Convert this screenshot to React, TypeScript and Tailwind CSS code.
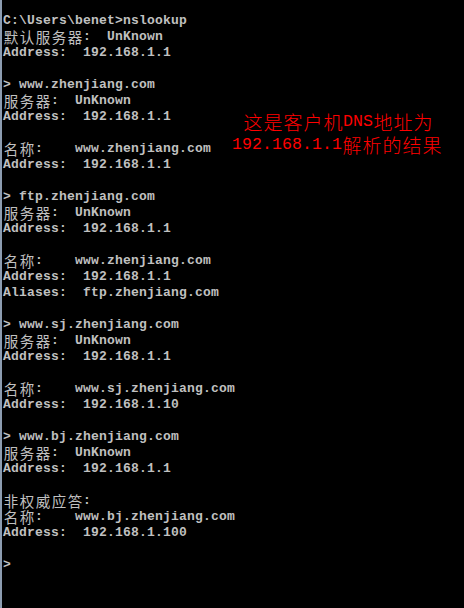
import React from 'react';

const lines: string[] = [
  'C:\\Users\\benet>nslookup',
  '默认服务器:  UnKnown',
  'Address:  192.168.1.1',
  '',
  '> www.zhenjiang.com',
  '服务器:  UnKnown',
  'Address:  192.168.1.1',
  '',
  '名称:    www.zhenjiang.com',
  'Address:  192.168.1.1',
  '',
  '> ftp.zhenjiang.com',
  '服务器:  UnKnown',
  'Address:  192.168.1.1',
  '',
  '名称:    www.zhenjiang.com',
  'Address:  192.168.1.1',
  'Aliases:  ftp.zhenjiang.com',
  '',
  '> www.sj.zhenjiang.com',
  '服务器:  UnKnown',
  'Address:  192.168.1.1',
  '',
  '名称:    www.sj.zhenjiang.com',
  'Address:  192.168.1.10',
  '',
  '> www.bj.zhenjiang.com',
  '服务器:  UnKnown',
  'Address:  192.168.1.1',
  '',
  '非权威应答:',
  '名称:    www.bj.zhenjiang.com',
  'Address:  192.168.1.100',
  '',
  '>',
];

const isWide = (ch: string) => ch.charCodeAt(0) > 0x2e80;

// console row: every char sits in a fixed 8px / 16px cell
const ConsoleLine: React.FC<{ text: string }> = ({ text }) => (
  <div className="flex h-4">
    {Array.from(text).map((ch, i) =>
      isWide(ch) ? (
        <span
          key={i}
          className="flex-none w-4 h-4 leading-4 text-center font-['Noto_Sans_CJK_SC',sans-serif] text-[14.5px] font-normal"
        >
          {ch}
        </span>
      ) : (
        <span key={i} className="flex-none w-2 h-4 leading-4 text-center">
          {ch === ' ' ? '\u00a0' : ch}
        </span>
      )
    )}
  </div>
);

const NoteLine: React.FC<{ text: string; className?: string }> = ({ text, className }) => (
  <div className={`flex h-[23px] ${className ?? ''}`}>
    {Array.from(text).map((ch, i) =>
      isWide(ch) ? (
        <span
          key={i}
          className="flex-none w-5 h-[23px] leading-[23px] text-center font-['Noto_Sans_CJK_SC',sans-serif] text-[19px] font-light"
        >
          {ch}
        </span>
      ) : (
        <span key={i} className="flex-none w-[10px] h-[23px] leading-[23px] text-center">
          {ch}
        </span>
      )
    )}
  </div>
);

const App: React.FC = () => {
  return (
    <div className="relative w-[464px] h-[608px] overflow-hidden bg-black border-l-2 border-[#8c9cb0]">
      <div className="pt-[13px] pl-px font-['Liberation_Mono',monospace] text-[13px] font-bold text-[#c0c0c0]">
        {lines.map((l, i) => (
          <ConsoleLine key={i} text={l} />
        ))}
      </div>

      {/* red annotation over the output */}
      <div className="absolute left-[230px] top-[110px] font-['Liberation_Mono',monospace] text-[16.5px] text-[#ff0000]">
        <NoteLine text="这是客户机DNS地址为" className="ml-[11px]" />
        <NoteLine text="192.168.1.1解析的结果" />
      </div>
    </div>
  );
};

export default App;
